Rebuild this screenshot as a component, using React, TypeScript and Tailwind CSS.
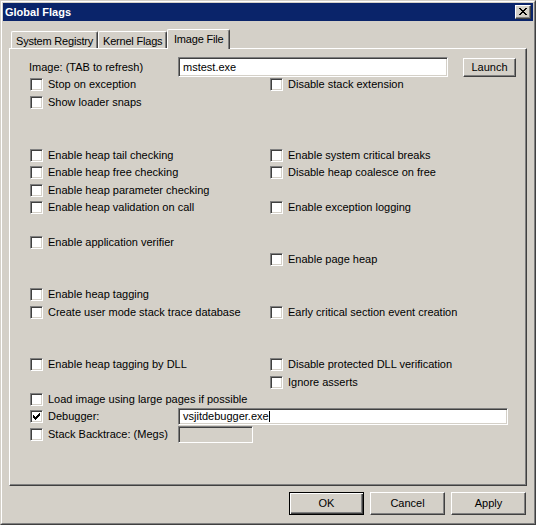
import React from 'react';

type Row = { h: 17 | 18; l?: string; r?: string; kind?: 'debugger' | 'stack' };

const rows: Row[] = [
  { h: 18, l: 'Stop on exception', r: 'Disable stack extension' },
  { h: 18, l: 'Show loader snaps' },
  { h: 17 },
  { h: 18 },
  { h: 17, l: 'Enable heap tail checking', r: 'Enable system critical breaks' },
  { h: 18, l: 'Enable heap free checking', r: 'Disable heap coalesce on free' },
  { h: 17, l: 'Enable heap parameter checking' },
  { h: 17, l: 'Enable heap validation on call', r: 'Enable exception logging' },
  { h: 18 },
  { h: 17, l: 'Enable application verifier' },
  { h: 18, r: 'Enable page heap' },
  { h: 17 },
  { h: 18, l: 'Enable heap tagging' },
  { h: 17, l: 'Create user mode stack trace database', r: 'Early critical section event creation' },
  { h: 18 },
  { h: 17 },
  { h: 18, l: 'Enable heap tagging by DLL', r: 'Disable protected DLL verification' },
  { h: 17, r: 'Ignore asserts' },
  { h: 17, l: 'Load image using large pages if possible' },
  { h: 18, kind: 'debugger' },
  { h: 18, kind: 'stack' },
];

function Check({ checked }: { checked?: boolean }) {
  return (
    <span className="relative block w-[13px] h-[13px] shrink-0 bg-white border border-t-[#808080] border-l-[#808080] border-b-white border-r-white shadow-[inset_1px_1px_0_#404040,inset_-1px_-1px_0_#d4d0c8]">
      {checked && (
        <svg className="absolute left-[2px] top-[2px]" width="7" height="7" viewBox="0 0 7 7" shapeRendering="crispEdges">
          <rect x="6" y="0" width="1" height="1" fill="#000" />
          <rect x="5" y="1" width="2" height="1" fill="#000" />
          <rect x="0" y="2" width="1" height="1" fill="#000" />
          <rect x="4" y="2" width="3" height="1" fill="#000" />
          <rect x="0" y="3" width="2" height="1" fill="#000" />
          <rect x="3" y="3" width="3" height="1" fill="#000" />
          <rect x="0" y="4" width="5" height="1" fill="#000" />
          <rect x="1" y="5" width="3" height="1" fill="#000" />
          <rect x="2" y="6" width="1" height="1" fill="#000" />
        </svg>
      )}
    </span>
  );
}

function Item({ label, checked }: { label: string; checked?: boolean }) {
  return (
    <div className="flex items-start gap-[5px]">
      <span className="mt-[2px]">
        <Check checked={checked} />
      </span>
      <span className="leading-[17px] whitespace-nowrap">{label}</span>
    </div>
  );
}

const sunken =
  'border border-t-[#808080] border-l-[#808080] border-b-white border-r-white shadow-[inset_1px_1px_0_#404040,inset_-1px_-1px_0_#d4d0c8]';
const raised =
  'border border-t-white border-l-white border-b-[#404040] border-r-[#404040] shadow-[inset_-1px_-1px_0_#808080]';

function Button({ label, primary }: { label: string; primary?: boolean }) {
  if (primary) {
    return (
      <div className="w-[75px] h-[23px] border border-black shadow-[inset_1px_1px_0_#fff,inset_-1px_-1px_0_#404040,inset_-2px_-2px_0_#808080] flex items-center justify-center">
        {label}
      </div>
    );
  }
  return <div className={`w-[75px] h-[23px] flex items-center justify-center ${raised}`}>{label}</div>;
}

function Tab({ label, w, selected }: { label: string; w: string; selected?: boolean }) {
  return (
    <div
      className={`${w} ${
        selected ? 'h-[20px] pl-[6px] z-10 bg-[#d4d0c8]' : 'h-[17px] mb-[1px] pl-[4px]'
      } border-l border-t border-r border-l-white border-t-white border-r-[#404040] rounded-t-[2px] shadow-[inset_-1px_0_0_#808080] pt-[2px] leading-[14px] tracking-[-0.2px] whitespace-nowrap`}
    >
      {label}
    </div>
  );
}

export default function App() {
  return (
    <div className="w-[536px] h-[525px] bg-[#d4d0c8] text-[11px] text-black font-['Liberation_Sans',Arial,sans-serif] border border-t-[#d4d0c8] border-l-[#d4d0c8] border-b-[#404040] border-r-[#404040]">
      <div className="h-full border border-t-white border-l-white border-b-[#808080] border-r-[#808080] p-[1px] flex flex-col">
        {/* caption */}
        <div className="h-[18px] shrink-0 bg-[#0a246a] flex items-center justify-between pl-[2px]">
          <span className="text-white font-bold leading-none">Global Flags</span>
          <div className={`w-[16px] h-[14px] mr-[2px] bg-[#d4d0c8] pl-[3px] pt-[2px] ${raised}`}>
            <svg width="8" height="7" viewBox="0 0 8 7" shapeRendering="crispEdges" className="block">
              <rect x="0" y="0" width="2" height="1" fill="#000" />
              <rect x="6" y="0" width="2" height="1" fill="#000" />
              <rect x="1" y="1" width="2" height="1" fill="#000" />
              <rect x="5" y="1" width="2" height="1" fill="#000" />
              <rect x="2" y="2" width="4" height="1" fill="#000" />
              <rect x="3" y="3" width="2" height="1" fill="#000" />
              <rect x="2" y="4" width="4" height="1" fill="#000" />
              <rect x="1" y="5" width="2" height="1" fill="#000" />
              <rect x="5" y="5" width="2" height="1" fill="#000" />
              <rect x="0" y="6" width="2" height="1" fill="#000" />
              <rect x="6" y="6" width="2" height="1" fill="#000" />
            </svg>
          </div>
        </div>

        {/* body */}
        <div className="flex-1 px-[6px] pt-[8px] flex flex-col">
          <div className="h-[20px] flex items-end pl-[2px] relative z-10 -mb-[1px]">
            <Tab label="System Registry" w="w-[87px]" />
            <Tab label="Kernel Flags" w="w-[69px]" />
            <Tab label="Image File" w="w-[63px]" selected />
          </div>

          <div className="h-[438px] border border-l-white border-t-white border-r-[#404040] border-b-[#404040] shadow-[inset_-1px_-1px_0_#808080]">
            <div className="mt-[8px] h-[19px] flex items-start pl-[19px]">
              <span className="w-[149px] shrink-0 leading-[20px]">Image: (TAB to refresh)</span>
              <div className={`w-[270px] h-[20px] bg-white pl-[4px] leading-[18px] ${sunken}`}>mstest.exe</div>
              <div className={`ml-[15px] mt-[1px] w-[53px] h-[19px] flex items-center justify-center ${raised}`}>
                Launch
              </div>
            </div>

            <div className="pl-[20px] flex flex-col">
              {rows.map((r, i) => {
                const hc = r.h === 17 ? 'h-[17px]' : 'h-[18px]';
                if (r.kind === 'debugger') {
                  return (
                    <div key={i} className={`${hc} flex items-start`}>
                      <div className="w-[148px] shrink-0">
                        <Item label="Debugger:" checked />
                      </div>
                      <div className={`w-[330px] h-[17px] bg-white pl-[4px] leading-[15px] flex items-center ${sunken}`}>
                        <span>vsjitdebugger.exe</span>
                        <span className="inline-block w-px h-[11px] bg-black" />
                      </div>
                    </div>
                  );
                }
                if (r.kind === 'stack') {
                  return (
                    <div key={i} className={`${hc} flex items-start`}>
                      <div className="w-[148px] shrink-0">
                        <Item label="Stack Backtrace: (Megs)" />
                      </div>
                      <div className={`w-[75px] h-[17px] bg-[#d4d0c8] ${sunken}`} />
                    </div>
                  );
                }
                return (
                  <div key={i} className={`${hc} flex items-start`}>
                    <div className="w-[240px] shrink-0">{r.l && <Item label={r.l} />}</div>
                    <div>{r.r && <Item label={r.r} />}</div>
                  </div>
                );
              })}
            </div>
          </div>

          <div className="mt-[6px] flex justify-end gap-[6px] pr-[1px]">
            <Button label="OK" primary />
            <Button label="Cancel" />
            <Button label="Apply" />
          </div>
        </div>
      </div>
    </div>
  );
}
